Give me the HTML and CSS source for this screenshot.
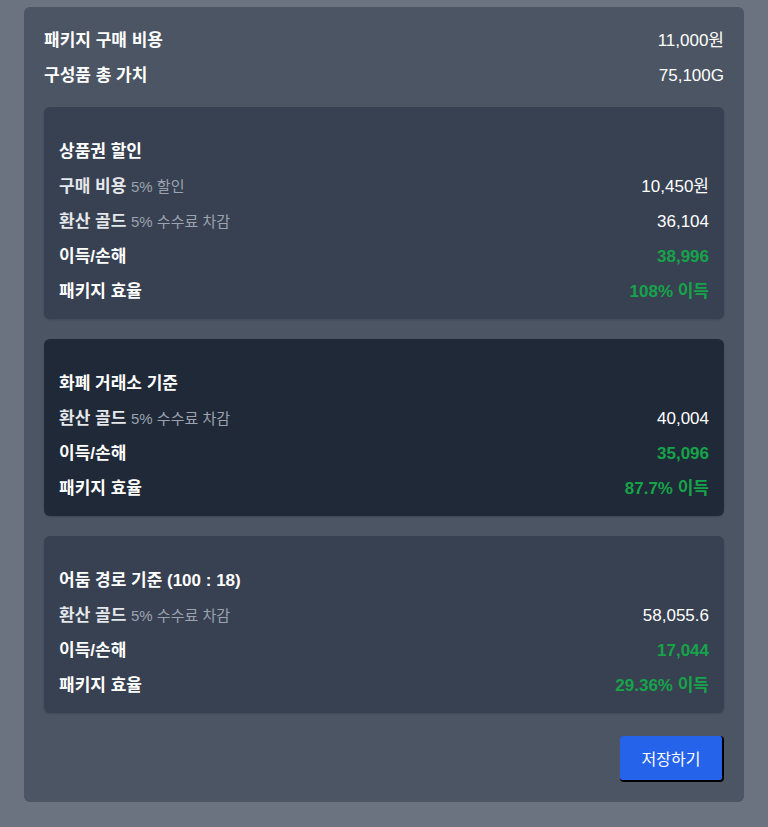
FILE: index.html
```html
<!DOCTYPE html>
<html lang="ko">
<head>
<meta charset="utf-8">
<link rel="stylesheet" href="styles.css">
</head>
<body>
<div class="page">
  <div class="panel">
    <div class="summary">
      <div class="row"><span class="label-w">패키지 구매 비용</span><span class="val">11,000원</span></div>
      <div class="row"><span class="label-w">구성품 총 가치</span><span class="val">75,100G</span></div>
    </div>

    <div class="card">
      <div class="title">상품권 할인</div>
      <div class="row"><span class="label">구매 비용 <span class="sub">5% 할인</span></span><span class="val">10,450원</span></div>
      <div class="row"><span class="label">환산 골드 <span class="sub">5% 수수료 차감</span></span><span class="val">36,104</span></div>
      <div class="row"><span class="label-w">이득/손해</span><span class="val green">38,996</span></div>
      <div class="row"><span class="label-w">패키지 효율</span><span class="val green">108% 이득</span></div>
    </div>

    <div class="card dark">
      <div class="title">화폐 거래소 기준</div>
      <div class="row"><span class="label">환산 골드 <span class="sub">5% 수수료 차감</span></span><span class="val">40,004</span></div>
      <div class="row"><span class="label-w">이득/손해</span><span class="val green">35,096</span></div>
      <div class="row"><span class="label-w">패키지 효율</span><span class="val green">87.7% 이득</span></div>
    </div>

    <div class="card">
      <div class="title">어둠 경로 기준 (100 : 18)</div>
      <div class="row"><span class="label">환산 골드 <span class="sub">5% 수수료 차감</span></span><span class="val">58,055.6</span></div>
      <div class="row"><span class="label-w">이득/손해</span><span class="val green">17,044</span></div>
      <div class="row"><span class="label-w">패키지 효율</span><span class="val green">29.36% 이득</span></div>
    </div>

    <div class="actions">
      <button class="save">저장하기</button>
    </div>
  </div>
</div>
</body>
</html>
```

FILE: styles.css
```css
html, body {
  margin: 0;
  padding: 0;
  background: #6b7280;
  font-family: "Liberation Sans", Arial, "Noto Sans CJK KR", sans-serif;
  color: #ffffff;
}

.page {
  padding: 7px 24px 26px;
}

.panel {
  background: #4b5563;
  border-radius: 6px;
  padding: 20px 20px 20px;
  display: flex;
  flex-direction: column;
}

.summary {
  display: flex;
  flex-direction: column;
  gap: 11px;
  padding-bottom: 21px;
}

.row {
  display: flex;
  justify-content: space-between;
  align-items: baseline;
  height: 24px;
  line-height: 27px;
  font-size: 17px;
}

.label-w {
  font-weight: 700;
  color: #ffffff;
}

.label {
  font-weight: 700;
  color: #e5e7eb;
}

.sub {
  font-weight: 400;
  font-size: 15px;
  color: #9ca3af;
}

.val {
  color: #ffffff;
}

.val.green {
  color: #16a34a;
  font-weight: 700;
}

.card {
  background: #374151;
  border-radius: 6px;
  padding: 31px 15px 17px;
  display: flex;
  flex-direction: column;
  gap: 11px;
  margin-bottom: 20px;
  box-shadow: 0 1px 2px rgba(0,0,0,0.15);
}

.card.dark {
  background: #1f2937;
}

.title {
  font-size: 17px;
  font-weight: 700;
  height: 24px;
  line-height: 28px;
  color: #ffffff;
}

.actions {
  display: flex;
  justify-content: flex-end;
  padding-top: 3px;
}

.save {
  background: #2563eb;
  color: #ffffff;
  border: none;
  border-right: 2px solid #000;
  border-bottom: 2px solid #000;
  border-radius: 4px;
  width: 104px;
  height: 46px;
  font-family: "Liberation Sans", Arial, "Noto Sans CJK KR", sans-serif;
  font-size: 16px;
  padding: 0;
  cursor: pointer;
}
```
